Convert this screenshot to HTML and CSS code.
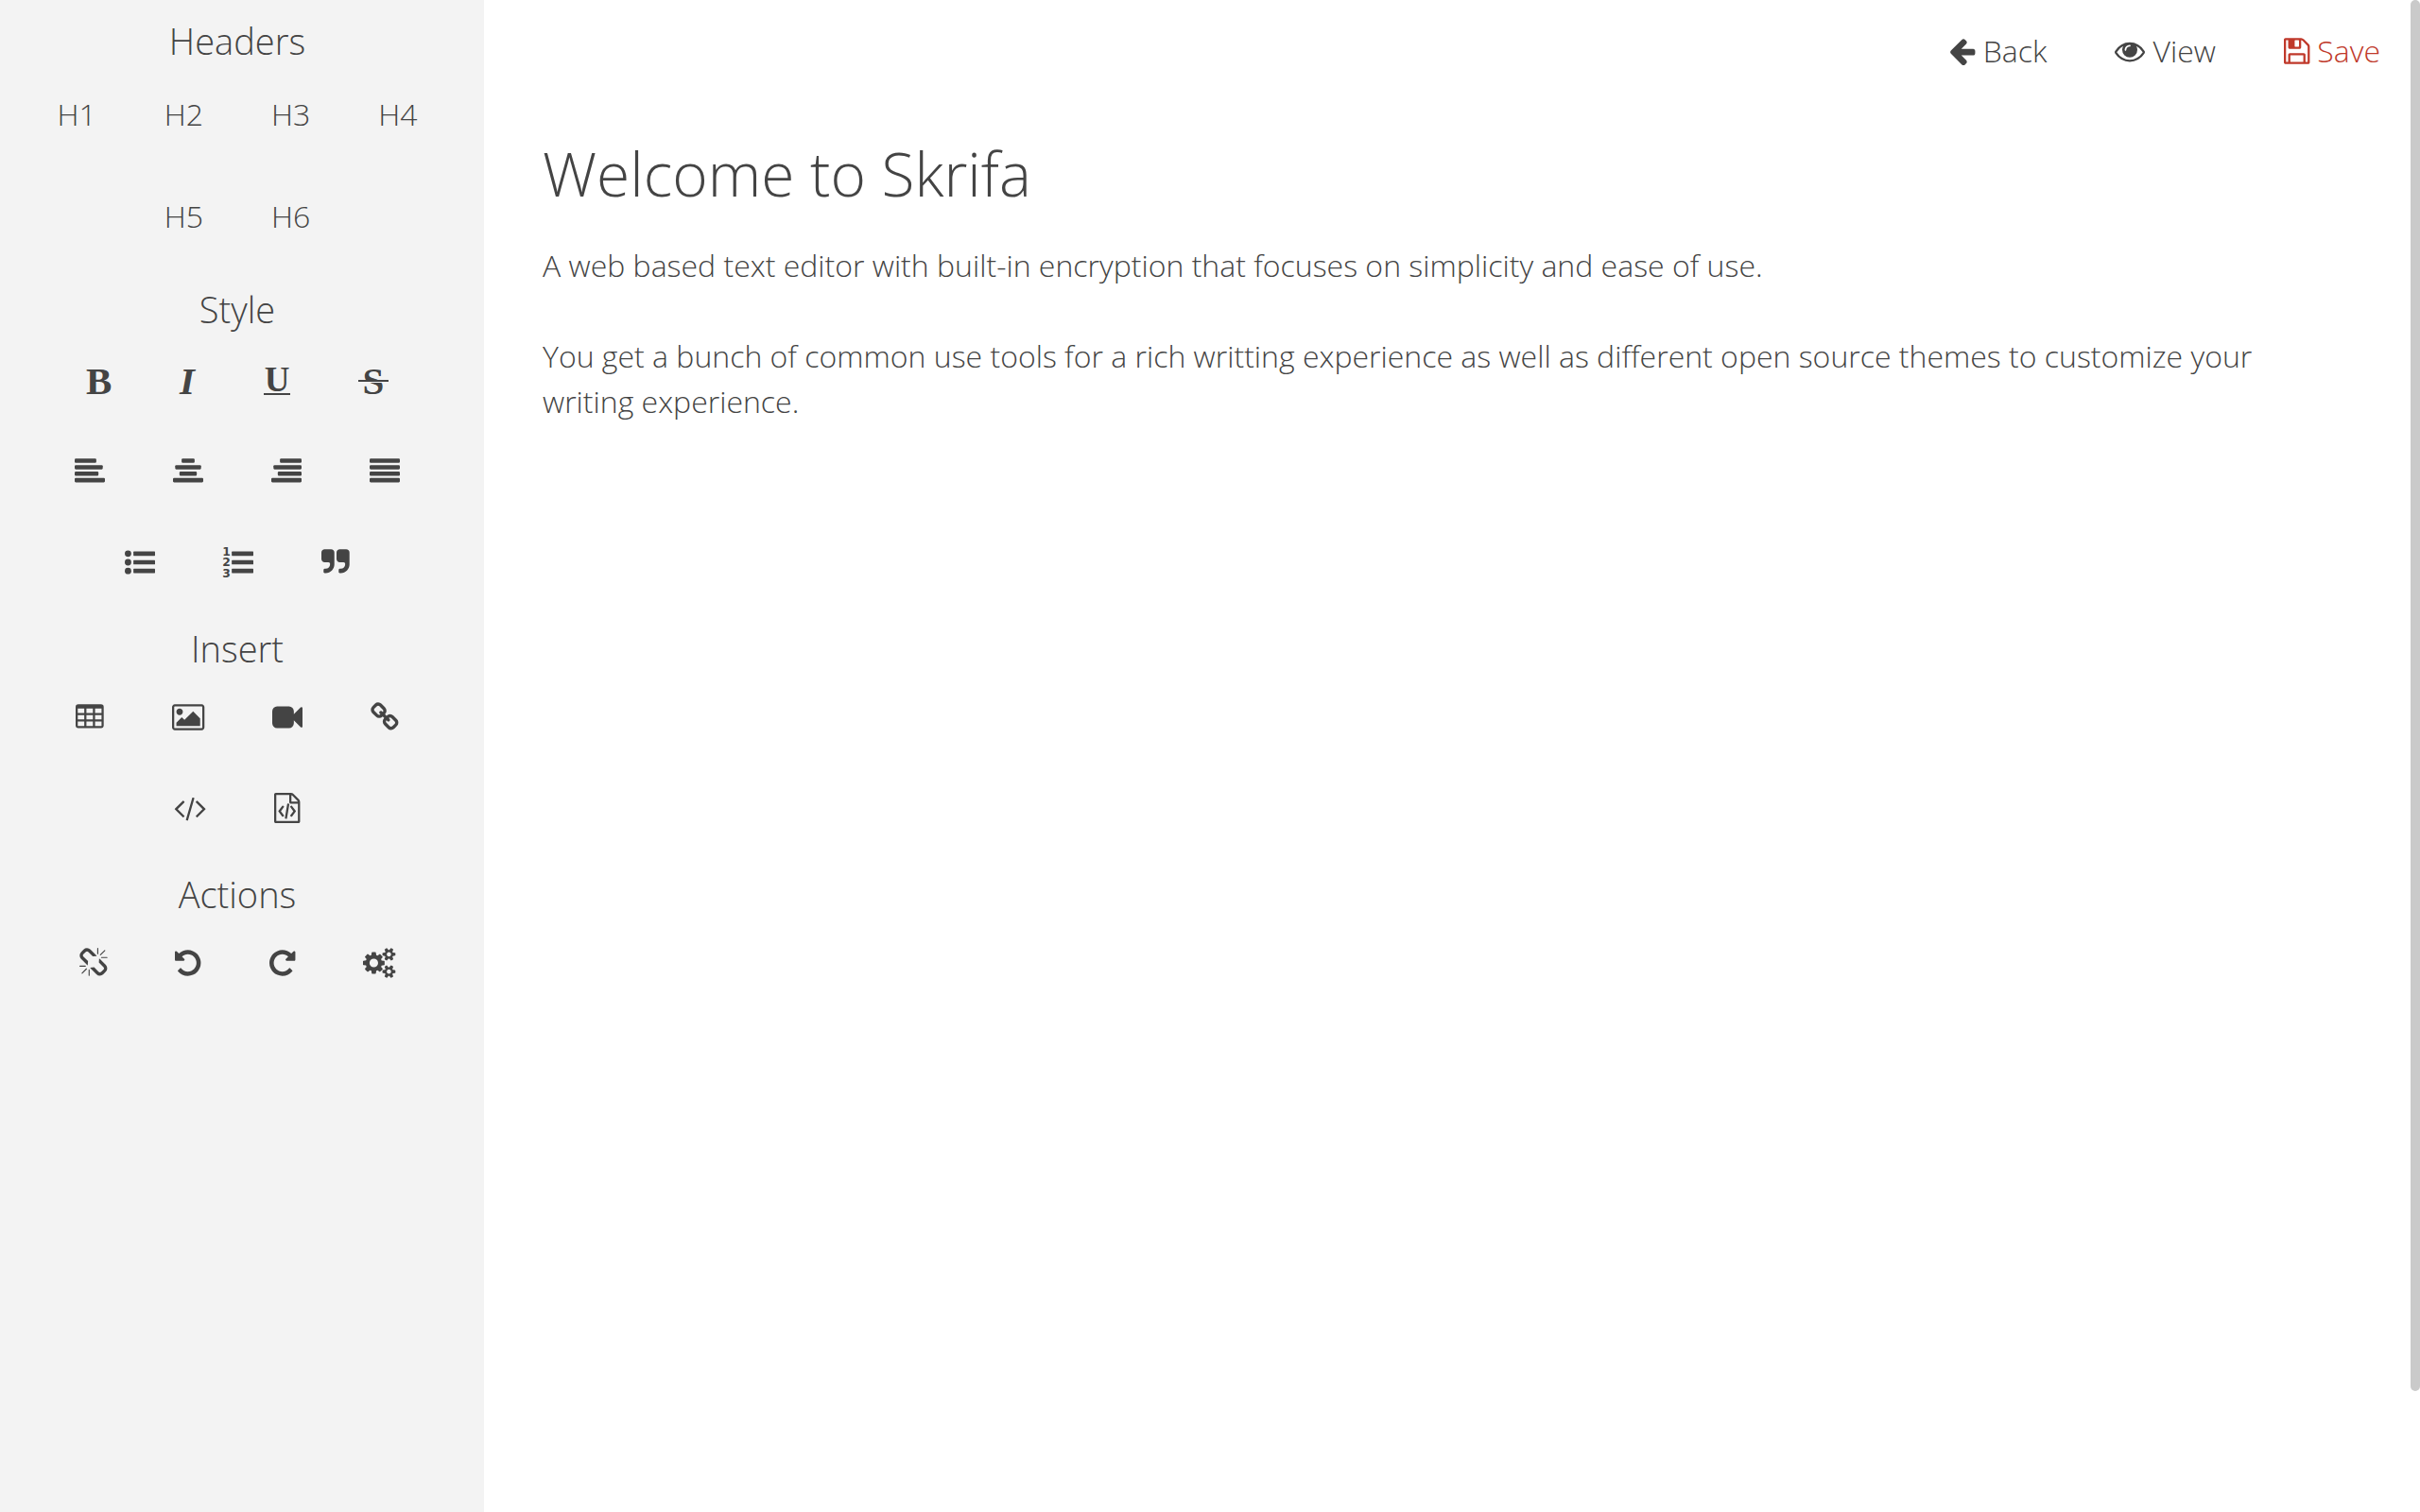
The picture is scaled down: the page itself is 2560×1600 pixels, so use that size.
FILE: index.html
```html
<!DOCTYPE html>
<html lang="en">
<head>
  <meta charset="utf-8">
  <title>Skrifa</title>
  <link rel="stylesheet" href="styles.css">
</head>
<body>
  <aside class="sidebar">
    <h3>Headers</h3>
    <div class="row headers">
      <button>H1</button>
      <button>H2</button>
      <button>H3</button>
      <button>H4</button>
    </div>
    <div class="row headers">
      <button>H5</button>
      <button>H6</button>
    </div>

    <h3>Style</h3>
    <div class="row letters">
      <button class="letter bold" title="Bold">B</button>
      <button class="letter italic" title="Italic">I</button>
      <button class="letter underline" title="Underline">U</button>
      <button class="letter strike" title="Strikethrough">S</button>
    </div>
    <div class="row">
      <button title="Align left">
        <svg viewBox="0 0 1792 1792"><rect y="128" width="1280" height="256" rx="64"/><rect y="512" width="1664" height="256" rx="64"/><rect y="896" width="1408" height="256" rx="64"/><rect y="1280" width="1792" height="256" rx="64"/></svg>
      </button>
      <button title="Align center">
        <svg viewBox="0 0 1792 1792"><rect x="512" y="128" width="768" height="256" rx="64"/><rect x="128" y="512" width="1536" height="256" rx="64"/><rect x="384" y="896" width="1024" height="256" rx="64"/><rect y="1280" width="1792" height="256" rx="64"/></svg>
      </button>
      <button title="Align right">
        <svg viewBox="0 0 1792 1792"><rect x="512" y="128" width="1280" height="256" rx="64"/><rect x="128" y="512" width="1664" height="256" rx="64"/><rect x="384" y="896" width="1408" height="256" rx="64"/><rect y="1280" width="1792" height="256" rx="64"/></svg>
      </button>
      <button title="Justify">
        <svg viewBox="0 0 1792 1792"><rect y="128" width="1792" height="256" rx="64"/><rect y="512" width="1792" height="256" rx="64"/><rect y="896" width="1792" height="256" rx="64"/><rect y="1280" width="1792" height="256" rx="64"/></svg>
      </button>
    </div>
    <div class="row">
      <button title="Bullet list">
        <svg viewBox="0 0 1792 1792"><circle cx="192" cy="384" r="192"/><circle cx="192" cy="896" r="192"/><circle cx="192" cy="1408" r="192"/><rect x="512" y="256" width="1280" height="256" rx="32"/><rect x="512" y="768" width="1280" height="256" rx="32"/><rect x="512" y="1280" width="1280" height="256" rx="32"/></svg>
      </button>
      <button title="Numbered list">
        <svg viewBox="0 0 1792 1792"><text x="-40" y="510">1</text><text x="-40" y="1140">2</text><text x="-40" y="1770">3</text><rect x="512" y="256" width="1280" height="256" rx="32"/><rect x="512" y="768" width="1280" height="256" rx="32"/><rect x="512" y="1280" width="1280" height="256" rx="32"/></svg>
      </button>
      <button title="Quote">
        <svg viewBox="64 0 1664 1792"><path d="M832 320v704q0 104-40.500 198.500t-109.500 163.500-163.500 109.500-198.500 40.500h-64q-26 0-45-19t-19-45v-128q0-26 19-45t45-19h64q106 0 181-75t75-181v-32q0-40-28-68t-68-28h-224q-80 0-136-56t-56-136v-384q0-80 56-136t136-56h384q80 0 136 56t56 136zm896 0v704q0 104-40.500 198.500t-109.500 163.500-163.500 109.500-198.500 40.500h-64q-26 0-45-19t-19-45v-128q0-26 19-45t45-19h64q106 0 181-75t75-181v-32q0-40-28-68t-68-28h-224q-80 0-136-56t-56-136v-384q0-80 56-136t136-56h384q80 0 136 56t56 136z"/></svg>
      </button>
    </div>

    <h3>Insert</h3>
    <div class="row">
      <button title="Table">
        <svg viewBox="64 0 1664 1792"><path fill-rule="evenodd" d="M224 128h1344q160 0 160 160v1088q0 160-160 160h-1344q-160 0-160-160v-1088q0-160 160-160zM192 384v256h384v-256zM704 384v256h384v-256zM1216 384v256h384v-256zM192 768v256h384v-256zM704 768v256h384v-256zM1216 768v256h384v-256zM192 1152v256h384v-256zM704 1152v256h384v-256zM1216 1152v256h384v-256z"/></svg>
      </button>
      <button title="Image">
        <svg viewBox="0 0 1920 1792"><path d="M640 576q0 80-56 136t-136 56-136-56-56-136 56-136 136-56 136 56 56 136zm1024 384v448h-1408v-192l320-320 160 160 512-512zm96-704h-1600q-13 0-22.500 9.500t-9.500 22.500v1216q0 13 9.500 22.500t22.500 9.500h1600q13 0 22.500-9.500t9.500-22.500v-1216q0-13-9.500-22.500t-22.500-9.500zm160 32v1216q0 66-47 113t-113 47h-1600q-66 0-113-47t-47-113v-1216q0-66 47-113t113-47h1600q66 0 113 47t47 113z"/></svg>
      </button>
      <button title="Video">
        <svg viewBox="0 0 1792 1792"><path d="M1792 352v1088q0 42-39 59-13 5-25 5-27 0-45-19l-403-403v166q0 119-84.500 203.500t-203.500 84.500h-704q-119 0-203.500-84.500t-84.500-203.500v-704q0-119 84.500-203.500t203.500-84.500h704q119 0 203.500 84.500t84.500 203.500v165l403-402q18-19 45-19 12 0 25 5 39 17 39 59z"/></svg>
      </button>
      <button title="Link">
        <svg viewBox="64 0 1664 1792"><path d="M1520 1216q0-40-28-68l-208-208q-28-28-68-28-42 0-72 32 3 3 19 18.500t21.500 21.500 15 19 13 25.500 3.500 27.500q0 40-28 68t-68 28q-15 0-27.500-3.500t-25.500-13-19-15-21.500-21.500-18.500-19q-33 31-33 73 0 40 28 68l206 207q27 27 68 27 40 0 68-26l147-146q28-28 28-67zm-703-705q0-40-28-68l-206-207q-28-28-68-28-39 0-68 27l-147 146q-28 28-28 67 0 40 28 68l208 208q27 27 68 27 42 0 72-31-3-3-19-18.500t-21.500-21.500-15-19-13-25.500-3.500-27.500q0-40 28-68t68-28q15 0 27.500 3.500t25.500 13 19 15 21.500 21.500 18.500 19q33-31 33-73zm895 705q0 120-85 203l-147 146q-83 83-203 83-121 0-204-85l-206-207q-83-83-83-203 0-123 88-209l-88-88q-86 88-208 88-120 0-204-84l-208-208q-84-84-84-204t85-203l147-146q83-83 203-83 121 0 204 85l206 207q83 83 83 203 0 123-88 209l88 88q86-88 208-88 120 0 204 84l208 208q84 84 84 204z"/></svg>
      </button>
    </div>
    <div class="row">
      <button title="Code">
        <svg viewBox="64 0 1920 1792"><path d="M681 1399l-50 50q-10 10-23 10t-23-10l-466-466q-10-10-10-23t10-23l466-466q10-10 23-10t23 10l50 50q10 10 10 23t-10 23l-393 393 393 393q10 10 10 23t-10 23zm591-1067l-373 1291q-4 13-15.500 19.500t-23.500 2.500l-62-17q-13-4-19.500-15.500t-2.500-24.500l373-1291q4-13 15.500-19.500t23.500-2.500l62 17q13 4 19.500 15.500t2.500 24.500zm657 651l-466 466q-10 10-23 10t-23-10l-50-50q-10-10-10-23t10-23l393-393-393-393q-10-10-10-23t10-23l50-50q10-10 23-10t23 10l466 466q10 10 10 23t-10 23z"/></svg>
      </button>
      <button title="Code file">
        <svg viewBox="128 0 1536 1792"><path d="M1596 380q28 28 48 76t20 88v1152q0 40-28 68t-68 28h-1344q-40 0-68-28t-28-68v-1600q0-40 28-68t68-28h896q40 0 88 20t76 48zm-444-244v376h376q-10-29-22-41l-313-313q-12-12-41-22zm384 1528v-1024h-416q-40 0-68-28t-28-68v-416h-768v1536h1280zm-928-896q8-11 21-12.500t24 6.500l51 38q11 8 12.500 21t-6.500 24l-182 243 182 243q8 11 6.500 24t-12.500 21l-51 38q-11 8-24 6.500t-21-12.500l-226-301q-14-19 0-38zm802 301q14 19 0 38l-226 301q-8 11-21 12.500t-24-6.500l-51-38q-11-8-12.500-21t6.500-24l182-243-182-243q-8-11-6.500-24t12.500-21l51-38q11-8 24-6.500t21 12.500zm-620 461q-13-2-20.500-13t-5.500-24l138-831q2-13 13-20.500t24-5.500l63 10q13 2 20.500 13t5.500 24l-138 831q-2 13-13 20.500t-24 5.500z"/></svg>
      </button>
    </div>

    <h3>Actions</h3>
    <div class="row">
      <button title="Unlink">
        <svg viewBox="64 0 1664 1792"><path d="M503 1271l-256 256q-10 9-23 9-12 0-23-9-9-10-9-23t9-23l256-256q10-9 23-9t23 9q9 10 9 23t-9 23zm169 41v320q0 14-9 23t-23 9-23-9-9-23v-320q0-14 9-23t23-9 23 9 9 23zm-224-224q0 14-9 23t-23 9h-320q-14 0-23-9t-9-23 9-23 23-9h320q14 0 23 9t9 23zm1264 128q0 120-85 203l-147 146q-83 83-203 83-121 0-204-85l-334-335q-21-21-42-56l239-18 273 274q28 28 68 27.500t68-27.500l147-146q28-28 28-67 0-40-28-68l-274-275 18-239q35 21 56 42l336 336q84 86 84 204zm-617-724l-239 18-273-274q-28-28-68-28-39 0-68 27l-147 146q-28 28-28 67 0 40 28 68l274 274-18 240q-35-21-56-42l-336-336q-84-86-84-204 0-120 85-203l147-146q83-83 203-83 121 0 204 85l334 335q21 21 42 56zm633 84q0 14-9 23t-23 9h-320q-14 0-23-9t-9-23 9-23 23-9h320q14 0 23 9t9 23zm-544-544v320q0 14-9 23t-23 9-23-9-9-23v-320q0-14 9-23t23-9 23 9 9 23zm407 151l-256 256q-11 9-23 9t-23-9q-9-10-9-23t9-23l256-256q10-9 23-9t23 9q9 10 9 23t-9 23z"/></svg>
      </button>
      <button title="Undo">
        <svg viewBox="128 0 1536 1792"><path id="undo" d="M1664 896q0 156-61 298t-164 245-245 164-298 61q-172 0-327-72.500t-264-204.500q-7-10-6.500-22.500t8.500-20.500l137-138q10-9 25-9 16 2 23 12 73 95 179 147t225 52q104 0 198.500-40.500t163.500-109.500 109.500-163.500 40.500-198.500-40.500-198.500-109.500-163.500-163.500-109.500-198.500-40.500q-98 0-188 35.500t-160 101.500l137 138q31 30 14 69-17 40-59 40h-448q-26 0-45-19t-19-45v-448q0-42 40-59 39-17 69 14l130 129q107-101 244.500-156.500t284.500-55.500q156 0 298 61t245 164 164 245 61 298z"/></svg>
      </button>
      <button title="Redo">
        <svg viewBox="128 0 1536 1792"><use href="#undo" transform="translate(1792 0) scale(-1 1)"/></svg>
      </button>
      <button title="Settings">
        <svg viewBox="0 0 1920 1792"><path d="M896 896q0-106-75-181t-181-75-181 75-75 181 75 181 181 75 181-75 75-181zm768 512q0-52-38-90t-90-38-90 38-38 90q0 53 37.500 90.500t90.500 37.500 90.500-37.500 37.500-90.500zm0-1024q0-52-38-90t-90-38-90 38-38 90q0 53 37.500 90.500t90.500 37.500 90.500-37.500 37.500-90.500zm-384 421v185q0 10-7 19.500t-16 10.500l-155 24q-11 35-32 76 34 48 90 115 7 11 7 20 0 12-7 19-23 30-82.500 89.500t-78.500 59.500q-11 0-21-7l-115-90q-37 19-77 31-11 108-23 155-7 24-30 24h-186q-11 0-20-7.500t-10-17.500l-23-153q-34-10-75-31l-118 89q-7 7-20 7-11 0-21-8-144-133-144-160 0-9 7-19 10-14 41-53t47-61q-23-44-35-82l-152-24q-10-1-17-9.500t-7-19.500v-185q0-10 7-19.500t16-10.500l155-24q11-35 32-76-34-48-90-115-7-11-7-20 0-12 7-20 22-30 82-89t79-59q11 0 21 7l115 90q34-18 77-32 11-108 23-154 7-24 30-24h186q11 0 20 7.500t10 17.500l23 153q34 10 75 31l118-89q8-7 20-7 11 0 21 8 144 133 144 160 0 8-7 19-12 16-42 54t-45 60q23 48 34 82l152 23q10 2 17 10.500t7 19.500zm640 533v140q0 16-149 31-12 27-30 52 51 113 51 138 0 4-4 7-122 71-124 71-8 0-46-47t-52-68q-20 2-30 2t-30-2q-14 21-52 68t-46 47q-2 0-124-71-4-3-4-7 0-25 51-138-18-25-30-52-149-15-149-31v-140q0-16 149-31 13-29 30-52-51-113-51-138 0-4 4-7 4-2 35-20t59-34 30-16q8 0 46 46.500t52 67.500q20-2 30-2t30 2q51-71 92-112l6-2q4 0 124 70 4 3 4 7 0 25-51 138 17 23 30 52 149 15 149 31zm0-1024v140q0 16-149 31-12 27-30 52 51 113 51 138 0 4-4 7-122 71-124 71-8 0-46-47t-52-68q-20 2-30 2t-30-2q-14 21-52 68t-46 47q-2 0-124-71-4-3-4-7 0-25 51-138-18-25-30-52-149-15-149-31v-140q0-16 149-31 13-29 30-52-51-113-51-138 0-4 4-7 4-2 35-20t59-34 30-16q8 0 46 46.500t52 67.500q20-2 30-2t30 2q51-71 92-112l6-2q4 0 124 70 4 3 4 7 0 25-51 138 17 23 30 52 149 15 149 31z"/></svg>
      </button>
    </div>
  </aside>

  <main class="content">
    <nav class="topbar">
      <a href="#back">
        <svg viewBox="128 0 1536 1792"><path d="M1664 896v128q0 53-32.500 90.500t-84.500 37.500h-704l293 294q38 36 38 90t-38 90l-75 76q-37 37-90 37-52 0-91-37l-651-652q-37-37-37-90 0-52 37-91l651-650q38-38 91-38 52 0 90 38l75 74q38 38 38 91t-38 91l-293 293h704q52 0 84.500 37.500t32.500 90.500z"/></svg>
        Back
      </a>
      <a href="#view">
        <svg viewBox="0 0 1792 1792"><path d="M1664 960q-152-236-381-353 61 104 61 225 0 185-131.500 316.500t-316.500 131.500-316.500-131.500-131.500-316.500q0-121 61-225-229 117-381 353 133 205 333.500 326.500t434.500 121.500 434.500-121.500 333.500-326.500zm-720-384q0-20-14-34t-34-14q-125 0-214.500 89.500t-89.500 214.500q0 20 14 34t34 14 34-14 14-34q0-86 61-147t147-61q20 0 34-14t14-34zm848 384q0 34-20 69-140 230-376.500 368.500t-499.500 138.500-499.500-139-376.500-368q-20-35-20-69t20-69q140-229 376.500-368t499.500-139 499.500 139 376.500 368q20 35 20 69z"/></svg>
        View
      </a>
      <a href="#save" class="save">
        <svg viewBox="128 0 1536 1792"><path d="M512 1536h768v-384h-768v384zm896 0h128v-896q0-14-10-38.500t-20-34.500l-281-281q-10-10-34-20t-39-10v416q0 40-28 68t-68 28h-576q-40 0-68-28t-28-68v-416h-128v1280h128v-416q0-40 28-68t68-28h832q40 0 68 28t28 68v416zm-384-928v-320q0-13-9.500-22.500t-22.500-9.500h-192q-13 0-22.500 9.500t-9.500 22.500v320q0 13 9.500 22.500t22.500 9.500h192q13 0 22.500-9.500t9.500-22.500zm640 32v928q0 40-28 68t-68 28h-1344q-40 0-68-28t-28-68v-1344q0-40 28-68t68-28h928q40 0 88 20t76 48l280 280q28 28 48 76t20 88z"/></svg>
        Save
      </a>
    </nav>
    <article class="editor" contenteditable="true" spellcheck="false">
      <h1>Welcome to Skrifa</h1>
      <p>A web based text editor with built-in encryption that focuses on simplicity and ease of use.</p>
      <p>You get a bunch of common use tools for a rich writting experience as well as different open source themes to customize your writing experience.</p>
    </article>
  </main>

  <div class="scrollbar"><div class="thumb"></div></div>
</body>
</html>
```
FILE: styles.css
```css
* {
  box-sizing: border-box;
}

body {
  display: flex;
  min-height: 100vh;
  margin: 0;
  font-family: "Open Sans", sans-serif;
  font-size: 32px;
  font-weight: 300;
  line-height: 48px;
  color: #444;
  background: #fff;
}

svg {
  display: block;
  height: 32px;
  overflow: visible;
  fill: currentColor;
}

svg text {
  font-family: "DejaVu Sans", sans-serif;
  font-size: 690px;
  font-weight: bold;
}

/* Sidebar */
.sidebar {
  width: 20%;
  padding-right: 10px;
  background: #f3f3f3;
}

.sidebar h3 {
  margin: 0;
  padding-top: 18px;
  font-size: 38px;
  font-weight: 300;
  line-height: 50px;
  text-align: center;
}

.row {
  display: flex;
  justify-content: center;
  align-items: center;
  gap: 72px;
  height: 96px;
}

.row.headers {
  height: 108px;
  padding-bottom: 2px;
}

.row.letters {
  height: 99px;
  padding-top: 3px;
}

button {
  padding: 0;
  border: none;
  background: none;
  color: inherit;
  font: inherit;
  cursor: pointer;
}

.letter {
  font-family: "Liberation Serif", serif;
  font-size: 41px;
  font-weight: bold;
  line-height: 32px;
}

.bold {
  width: 26px;
}

.italic {
  width: 18px;
  font-style: italic;
}

.underline {
  width: 28px;
  height: 30px;
  border-bottom: 2px solid;
  font-size: 37px;
  line-height: 26px;
}

.strike {
  position: relative;
  width: 32px;
}

.strike::after {
  content: "";
  position: absolute;
  top: 15px;
  left: 0;
  width: 100%;
  height: 2px;
  background: #444;
  box-shadow: 0 1px #f3f3f3;
}

/* Editor */
.content {
  flex: 1;
}

.topbar {
  display: flex;
  justify-content: flex-end;
  align-items: center;
  gap: 72px;
  height: 108px;
  padding: 0 32px;
}

.topbar a {
  display: flex;
  align-items: center;
  gap: 8px;
  color: inherit;
  text-decoration: none;
}

.topbar .save {
  color: #c0392b;
}

.editor {
  padding: 32px 72px 32px 62px;
  outline: none;
}

.editor h1 {
  margin: 0 0 29px;
  font-size: 64px;
  font-weight: 300;
  line-height: 88px;
}

.editor p {
  margin: 0 0 48px;
}

.scrollbar {
  width: 10px;
}

.thumb {
  height: 92vh;
  border-radius: 5px;
  background: #cacaca;
}
```
